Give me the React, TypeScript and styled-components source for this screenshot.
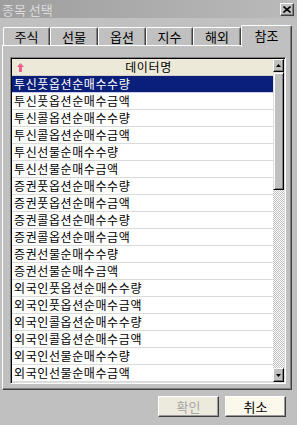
import styled, { createGlobalStyle } from "styled-components";

const GlobalStyle = createGlobalStyle`
  html, body {
    margin: 0;
    padding: 0;
    background: #c0c0c0;
  }
  body {
    font-family: "Noto Sans CJK KR", "Noto Sans", sans-serif;
    font-size: 12px;
  }
`;

const tabs = [
  { label: "주식", width: 47 },
  { label: "선물", width: 48 },
  { label: "옵션", width: 48 },
  { label: "지수", width: 47 },
  { label: "해외", width: 48 },
  { label: "참조", width: 51, active: true },
];

const rows = [
  "투신풋옵션순매수수량",
  "투신풋옵션순매수금액",
  "투신콜옵션순매수수량",
  "투신콜옵션순매수금액",
  "투신선물순매수수량",
  "투신선물순매수금액",
  "증권풋옵션순매수수량",
  "증권풋옵션순매수금액",
  "증권콜옵션순매수수량",
  "증권콜옵션순매수금액",
  "증권선물순매수수량",
  "증권선물순매수금액",
  "외국인풋옵션순매수수량",
  "외국인풋옵션순매수금액",
  "외국인콜옵션순매수수량",
  "외국인콜옵션순매수금액",
  "외국인선물순매수수량",
  "외국인선물순매수금액",
];

export default function App() {
  return (
    <>
      <GlobalStyle />
      <Window>
        <TitleBar>
          <Title>종목 선택</Title>
          <CloseButton>
            <svg width="8" height="7" viewBox="0 0 8 7">
              <path d="M0.5 0.5 L7.5 6.5 M7.5 0.5 L0.5 6.5" stroke="#000" strokeWidth="1.6" />
            </svg>
          </CloseButton>
        </TitleBar>
        <Main>
          <TabStrip>
            {tabs.map((t) => (
              <Tab key={t.label} $width={t.width} $active={t.active}>
                {t.label}
              </Tab>
            ))}
          </TabStrip>
          <Panel>
            <ListBox>
              <ListContent>
                <Header>
                  <SortArrow width="7" height="9" viewBox="0 0 7 9">
                    <path d="M3.5 0 L7 4 L5 4 L5 9 L2 9 L2 4 L0 4 Z" fill="#ec5f8e" />
                  </SortArrow>
                  <HeaderLabel>데이터명</HeaderLabel>
                </Header>
                {rows.map((r, i) => (
                  <Row key={r} $selected={i === 0}>
                    {r}
                  </Row>
                ))}
              </ListContent>
              <ScrollBar>
                <ScrollButton>
                  <svg width="5" height="3" viewBox="0 0 5 3">
                    <path d="M2.5 0 L5 3 L0 3 Z" fill="#000" />
                  </svg>
                </ScrollButton>
                <Thumb />
                <Track />
                <ScrollButton $down>
                  <svg width="5" height="3" viewBox="0 0 5 3">
                    <path d="M0 0 L5 0 L2.5 3 Z" fill="#000" />
                  </svg>
                </ScrollButton>
              </ScrollBar>
            </ListBox>
          </Panel>
          <ButtonRow>
            <DialogButton disabled>확인</DialogButton>
            <DialogButton>취소</DialogButton>
          </ButtonRow>
        </Main>
      </Window>
    </>
  );
}

const Window = styled.div`
  width: 297px;
  height: 425px;
  background: #c0c0c0;
  display: flex;
  flex-direction: column;
  overflow: hidden;
`;

const TitleBar = styled.div`
  height: 18px;
  flex-shrink: 0;
  display: flex;
  align-items: center;
  justify-content: space-between;
  padding: 0 3px 0 2px;
  background: linear-gradient(to right, #9e9e9e, #bababa);
`;

const Title = styled.span`
  color: #dadada;
  font-size: 13px;
  line-height: 15px;
`;

const CloseButton = styled.div`
  box-sizing: border-box;
  width: 14px;
  height: 13px;
  display: flex;
  align-items: center;
  justify-content: center;
  background: #c0c0c0;
  border-top: 1px solid #fff;
  border-left: 1px solid #fff;
  border-right: 1px solid #404040;
  border-bottom: 1px solid #404040;
  box-shadow: inset -1px -1px 0 #808080;
`;

const Main = styled.div`
  display: flex;
  flex-direction: column;
  padding: 7px 5px 0 2px;
`;

const TabStrip = styled.div`
  height: 20px;
  display: flex;
  align-items: flex-end;
  padding-left: 1px;
  position: relative;
  z-index: 2;
`;

const Tab = styled.div<{ $width: number; $active?: boolean }>`
  box-sizing: border-box;
  width: ${(p) => p.$width}px;
  height: ${(p) => (p.$active ? 22 : 18)}px;
  margin-bottom: ${(p) => (p.$active ? -2 : 0)}px;
  padding-bottom: ${(p) => (p.$active ? 3 : 0)}px;
  display: flex;
  align-items: center;
  justify-content: center;
  background: #c0c0c0;
  color: #000;
  font-size: 13px;
  line-height: 15px;
  border-top: 1px solid #fff;
  border-left: 1px solid #fff;
  border-right: 1px solid #404040;
  border-top-left-radius: 2px;
  border-top-right-radius: 2px;
  box-shadow: inset -1px 0 0 #808080;
`;

const Panel = styled.div`
  box-sizing: border-box;
  height: 345px;
  padding: 11px 0 0 7px;
  background: #c0c0c0;
  border-top: 1px solid #fff;
  border-left: 1px solid #fff;
  border-right: 1px solid #404040;
  border-bottom: 1px solid #404040;
  box-shadow: inset -1px -1px 0 #808080;
`;

const ListBox = styled.div`
  box-sizing: border-box;
  width: 276px;
  height: 327px;
  display: flex;
  border-top: 1px solid #808080;
  border-left: 1px solid #808080;
  border-right: 1px solid #fff;
  border-bottom: 1px solid #fff;
  box-shadow: inset 1px 1px 0 #000, inset -1px -1px 0 #dfdfdf;
  padding: 1px;
`;

const ListContent = styled.div`
  flex: 1;
  display: flex;
  flex-direction: column;
  background: #fff;
  overflow: hidden;
`;

const Header = styled.div`
  box-sizing: border-box;
  height: 17px;
  flex-shrink: 0;
  display: flex;
  align-items: center;
  padding-left: 5px;
  background: #ece9d8;
  border-bottom: 1px solid #d4d0c8;
`;

const SortArrow = styled.svg`
  flex-shrink: 0;
`;

const HeaderLabel = styled.span`
  flex: 1;
  text-align: center;
  color: #000;
  font-size: 12px;
  letter-spacing: 0.6px;
  line-height: 14px;
`;

const Row = styled.div<{ $selected?: boolean }>`
  box-sizing: border-box;
  height: 17px;
  flex-shrink: 0;
  padding-left: 2px;
  display: flex;
  align-items: center;
  font-size: 12px;
  letter-spacing: 0.6px;
  line-height: 14px;
  white-space: nowrap;
  color: ${(p) => (p.$selected ? "#fff" : "#000")};
  background: ${(p) => (p.$selected ? "#0a1f7a" : "#fff")};
  border-bottom: 1px solid ${(p) => (p.$selected ? "#c8cce8" : "#dadada")};
`;

const ScrollBar = styled.div`
  width: 11px;
  display: flex;
  flex-direction: column;
`;

const ScrollButton = styled.div<{ $down?: boolean }>`
  box-sizing: border-box;
  height: ${(p) => (p.$down ? 14 : 13)}px;
  flex-shrink: 0;
  display: flex;
  align-items: center;
  justify-content: center;
  background: #c0c0c0;
  border-top: 1px solid #fff;
  border-left: 1px solid #fff;
  border-right: 1px solid #000;
  border-bottom: 1px solid #000;
  box-shadow: inset -1px -1px 0 #808080;
`;

const Thumb = styled.div`
  box-sizing: border-box;
  height: 118px;
  flex-shrink: 0;
  background: #c0c0c0;
  border-top: 1px solid #dfdfdf;
  border-left: 1px solid #dfdfdf;
  border-right: 1px solid #000;
  border-bottom: 1px solid #000;
  box-shadow: inset 1px 1px 0 #fff, inset -1px -1px 0 #808080;
`;

const Track = styled.div`
  flex: 1;
  background: repeating-conic-gradient(#c0c0c0 0 25%, #fff 0 50%) 0 0 / 2px 2px;
`;

const ButtonRow = styled.div`
  display: flex;
  justify-content: flex-end;
  gap: 6px;
  margin-top: 6px;
  padding-right: 6px;
`;

const DialogButton = styled.button`
  box-sizing: border-box;
  width: 61px;
  height: 21px;
  padding: 0;
  font-family: "Noto Sans CJK KR", "Noto Sans", sans-serif;
  font-size: 13px;
  line-height: 15px;
  color: #000;
  background: #fbf9ec;
  border-top: 1px solid #fff;
  border-left: 1px solid #fff;
  border-right: 1px solid #404040;
  border-bottom: 1px solid #404040;
  box-shadow: inset -1px -1px 0 #9a9a9a;
  &:disabled {
    color: #a6a6a6;
    background: #eceadc;
  }
`;
